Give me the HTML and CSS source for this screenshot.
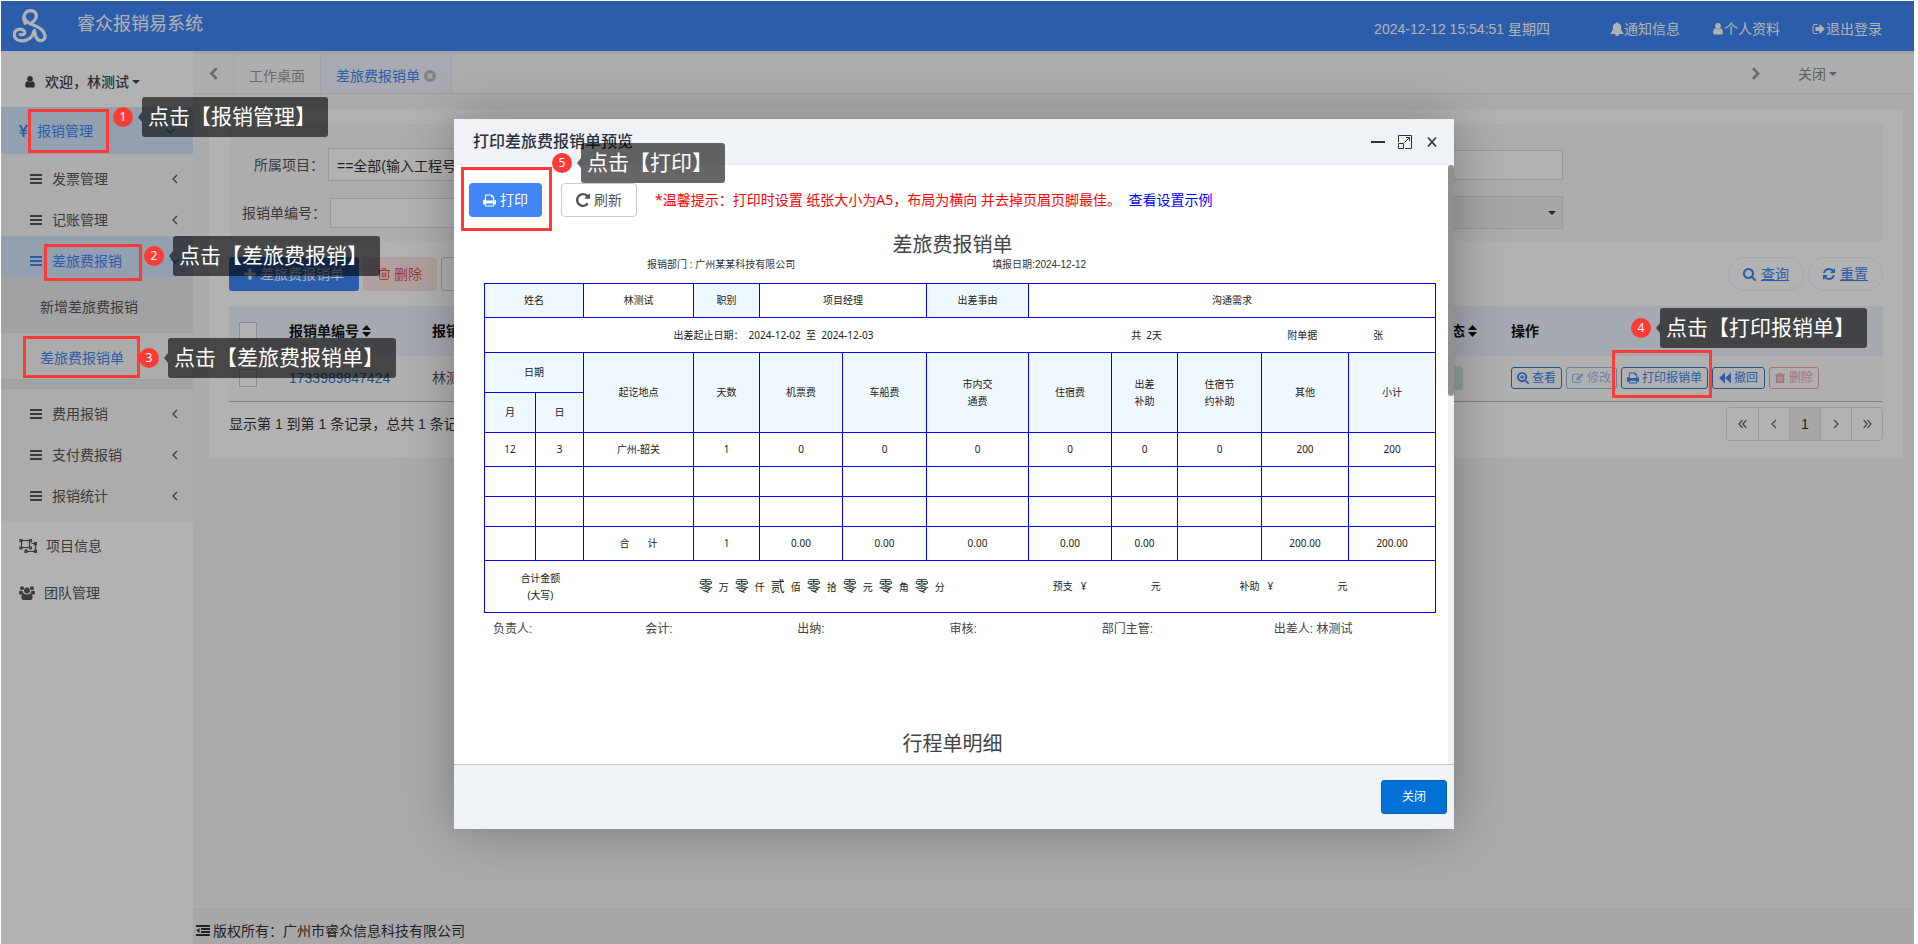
FILE: index.html
```html
<!DOCTYPE html>
<html lang="zh-CN">
<head>
<meta charset="utf-8">
<title>睿众报销易系统</title>
<link rel="stylesheet" href="styles.css">
</head>
<body>
<svg class="sprite" aria-hidden="true">
  <symbol id="user" viewBox="192 128 1408 1600"><path d="M1536 1399q0 109-62.5 187t-150.5 78h-854q-88 0-150.5-78t-62.5-187q0-85 8.5-160.5t31.5-152 58.5-131 94-89 134.5-34.5q131 128 313 128t313-128q76 0 134.5 34.5t94 89 58.5 131 31.5 152 8.5 160.5zm-256-887q0 159-112.5 271.5t-271.5 112.5-271.5-112.5-112.5-271.5 112.5-271.5 271.5-112.5 271.5 112.5 112.5 271.5z"/></symbol>
  <symbol id="bell" viewBox="0 0 1792 1792"><path d="M912 1696q0-16-16-16-59 0-101.5-42.5t-42.5-101.5q0-16-16-16t-16 16q0 73 51.5 124.5t124.5 51.5q16 0 16-16zm816-288q0 52-38 90t-90 38h-448q0 106-75 181t-181 75-181-75-75-181h-448q-52 0-90-38t-38-90q50-42 91-88t85-119.5 74.5-158.5 50-206 19.5-260q0-152 117-282.5t307-158.5q-8-19-8-39 0-40 28-68t68-28 68 28 28 68q0 20-8 39 190 28 307 158.5t117 282.5q0 139 19.5 260t50 206 74.5 158.5 85 119.5 91 88z"/></symbol>
  <symbol id="signout" viewBox="0 0 1792 1792"><path d="M704 1440q0 4 1 20t.5 26.5-3 23.5-10 19.5-20.5 6.5h-320q-119 0-203.5-84.5t-84.5-203.5v-704q0-119 84.5-203.5t203.5-84.5h320q13 0 22.5 9.5t9.5 22.5q0 4 1 20t.5 26.5-3 23.5-10 19.5-20.5 6.5h-320q-66 0-113 47t-47 113v704q0 66 47 113t113 47h312l11.5 1 11.5 3 8 5.5 7 9 2 13.5zm928-544q0 26-19 45l-544 544q-19 19-45 19t-45-19-19-45v-288h-448q-26 0-45-19t-19-45v-384q0-26 19-45t45-19h448v-288q0-26 19-45t45-19 45 19l544 544q19 19 19 45z"/></symbol>
  <symbol id="bars" viewBox="0 0 12 11"><path d="M0 0h12v2H0zM0 4h12v2H0zM0 8h12v2H0z"/></symbol>
  <symbol id="chevleft" viewBox="320 0 1200 1664"><path d="M1427 301l-531 531 531 531q19 19 19 45t-19 45l-166 166q-19 19-45 19t-45-19l-742-742q-19-19-19-45t19-45l742-742q19-19 45-19t45 19l166 166q19 19 19 45t-19 45z"/></symbol>
  <symbol id="chevright" viewBox="320 0 1200 1664"><path d="M1363 877l-742 742q-19 19-45 19t-45-19l-166-166q-19-19-19-45t19-45l531-531-531-531q-19-19-19-45t19-45l166-166q19-19 45-19t45 19l742 742q19 19 19 45t-19 45z"/></symbol>
  <symbol id="timescircle" viewBox="128 128 1536 1536"><path d="M1277 1122q0-26-19-45l-181-181 181-181q19-19 19-45 0-27-19-46l-90-90q-19-19-46-19-26 0-45 19l-181 181-181-181q-19-19-45-19-27 0-46 19l-90 90q-19 19-19 46 0 26 19 45l181 181-181 181q-19 19-19 45 0 27 19 46l90 90q19 19 46 19 26 0 45-19l181-181 181 181q19 19 45 19 27 0 46-19l90-90q19-19 19-46zm387-226q0 209-103 385.5t-279.5 279.5-385.5 103-385.5-103-279.5-279.5-103-385.5 103-385.5 279.5-279.5 385.5-103 385.5 103 279.5 279.5 103 385.5z"/></symbol>
  <symbol id="search" viewBox="64 128 1664 1664"><path d="M1216 832q0-185-131.5-316.5t-316.5-131.5-316.5 131.5-131.5 316.5 131.5 316.5 316.5 131.5 316.5-131.5 131.5-316.5zm512 832q0 52-38 90t-90 38q-54 0-90-38l-343-342q-179 124-399 124-143 0-273.5-55.5t-225-150-150-225-55.5-273.5 55.5-273.5 150-225 225-150 273.5-55.5 273.5 55.5 225 150 150 225 55.5 273.5q0 220-124 399l343 343q37 37 37 90z"/></symbol>
  <symbol id="zoomin" viewBox="64 128 1664 1664"><path d="M1216 832q0-185-131.5-316.5t-316.5-131.5-316.5 131.5-131.5 316.5 131.5 316.5 316.5 131.5 316.5-131.5 131.5-316.5zm512 832q0 52-38 90t-90 38q-54 0-90-38l-343-342q-179 124-399 124-143 0-273.5-55.5t-225-150-150-225-55.5-273.5 55.5-273.5 150-225 225-150 273.5-55.5 273.5 55.5 225 150 150 225 55.5 273.5q0 220-124 399l343 343q37 37 37 90zM690 530h156v224h224v156H846v224H690V910H466V754h224z"/></symbol>
  <symbol id="refresh" viewBox="128 128 1536 1536"><path d="M1639 1056q0 5-1 7-64 268-268 434.5t-478 166.5q-146 0-282.5-55t-243.5-157l-129 129q-19 19-45 19t-45-19-19-45v-448q0-26 19-45t45-19h448q26 0 45 19t19 45-19 45l-137 137q71 66 161 102t187 36q134 0 250-65t186-179q11-17 53-117 8-23 30-23h192q13 0 22.5 9.5t9.5 22.5zm25-800v448q0 26-19 45t-45 19h-448q-26 0-45-19t-19-45 19-45l138-138q-148-137-349-137-134 0-250 65t-186 179q-11 17-53 117-8 23-30 23h-199q-13 0-22.5-9.5t-9.5-22.5v-7q65-268 270-434.5t480-166.5q146 0 284 55.5t245 156.5l130-129q19-19 45-19t45 19 19 45z"/></symbol>
  <symbol id="repeat" viewBox="128 128 1536 1536"><path d="M1664 256v448q0 26-19 45t-45 19h-448q-42 0-59-40-17-39 14-69l138-138q-148-137-349-137-104 0-198.500 40.500t-163.500 109.500-109.500 163.500-40.500 198.500 40.500 198.500 109.500 163.500 163.500 109.500 198.500 40.500q119 0 225-52t179-147q7-10 23-12 15 0 25 9l137 138q9 8 9.500 20.500t-7.500 22.500q-109 132-264 204.500t-327 72.500q-156 0-298-61t-245-164-164-245-61-298 61-298 164-245 245-164 298-61q147 0 284.500 55.500t244.500 156.500l130-129q29-31 70-14 39 17 39 59z"/></symbol>
  <symbol id="print" viewBox="64 128 1664 1536"><path d="M448 1536h896v-256h-896v256zm0-640h896v-384h-160q-40 0-68-28t-28-68v-160h-640v640zm1152 64q0-26-19-45t-45-19-45 19-19 45 19 45 45 19 45-19 19-45zm128 0v416q0 13-9.500 22.500t-22.500 9.500h-224v160q0 40-28 68t-68 28h-960q-40 0-68-28t-28-68v-160h-224q-13 0-22.500-9.500t-9.500-22.500v-416q0-79 56.500-135.500t135.500-56.500h64v-544q0-40 28-68t68-28h672q40 0 88 20t76 48l152 152q28 28 48 76t20 88v256h64q79 0 135.500 56.500t56.500 135.500z"/></symbol>
  <symbol id="plus" viewBox="0 0 12 12"><path d="M4.500 0.500h3v4h4v3h-4v4h-3v-4h-4v-3h4z"/></symbol>
  <symbol id="trash" viewBox="0 0 12 12"><path fill-rule="evenodd" d="M4 0h4l1 1.500h3v1.300h-1V11q0 1-1 1H2q-1 0-1-1V2.800H0V1.500h3zM3.300 4.200v6h1v-6zM5.500 4.200v6h1v-6zM7.700 4.200v6h1v-6zM4.600 1l-.3.600h3.400L7.400 1z"/></symbol>
  <symbol id="trasho" viewBox="0 0 12 12"><path fill="none" stroke="currentColor" d="M0 2.500h12M3.500 2.500l.7-1.800h3.600l.7 1.800M1.500 2.500v8q0 1 1 1h7q1 0 1-1v-8M4.200 4.500v5M6 4.500v5M7.800 4.500v5"/></symbol>
  <symbol id="edit" viewBox="0 0 14 12"><path fill="none" stroke="currentColor" stroke-width="1.300" d="M8.500 1.600H2.600q-1.900 0-1.900 1.900v5.800q0 1.900 1.900 1.900h5.800q1.900 0 1.900-1.900V7.800"/><path d="M11.200.3l2.300 2.300-6 6H5.200V6.300z"/></symbol>
  <symbol id="backward" viewBox="0 0 12 11"><path d="M6 0v11L.2 5.500zM12 0v11L6.200 5.500z"/></symbol>
  <symbol id="outdent" viewBox="0 0 14 11"><path d="M0 0h14v2H0zM5 3h9v2H5zM5 6h9v2H5zM0 9h14v2H0zM3.500 3v5L.3 5.500z"/></symbol>
  <symbol id="yen" viewBox="0 0 9 12"><path d="M0 0h2.200l2.300 4.300L6.800 0H9L6.300 5h1.900v1.300H5.500v1.100h2.700v1.300H5.500V12h-2V8.700H.8V7.400h2.700V6.300H.8V5h1.900z"/></symbol>
  <symbol id="group" viewBox="0 0 18 14"><path fill="none" stroke="currentColor" stroke-width="1.200" d="M2.500 1.500h8v7h-8zM12.500 4.500h4v8h-9v-2.500M1 .6h2v2H1zM10.500.6h2v2h-2zM1 8h2v2H1zM10.500 8h2v2h-2zM15.400 3.600h2v2h-2zM15.400 11.400h2v2h-2zM6 11.400h2v2H6z"/></symbol>
  <symbol id="users" viewBox="0 0 16 14"><circle cx="3" cy="2.300" r="2"/><circle cx="13" cy="2.300" r="2"/><circle cx="8" cy="4.500" r="2.900"/><path d="M1.300 4.500q1 .7 2.500.5-.2 1.600.9 2.700-1 .1-1.700.8H1.200Q0 8.500 0 7.200q0-2.500 1.300-2.700zM14.700 4.500q-1 .7-2.500.5.2 1.600-.9 2.700 1 .1 1.700.8h1.800q1.200 0 1.200-1.300 0-2.500-1.300-2.700zM4.800 7.500q1.300 1 3.200 1t3.200-1q2.400 0 2.400 4.300 0 2.200-2 2.200H4.400q-2 0-2-2.200 0-4.300 2.400-4.300z"/></symbol>
  <symbol id="angleleft" viewBox="0 0 6 10"><path fill="none" stroke="currentColor" stroke-width="1.300" d="M5 1L1 5l4 4"/></symbol>
  <symbol id="angleright" viewBox="0 0 6 10"><path fill="none" stroke="currentColor" stroke-width="1.300" d="M1 1l4 4-4 4"/></symbol>
  <symbol id="angledown" viewBox="0 0 10 6"><path fill="none" stroke="currentColor" stroke-width="1.300" d="M1 1l4 4 4-4"/></symbol>
  <symbol id="dblleft" viewBox="0 0 9 10"><path fill="none" stroke="currentColor" stroke-width="1.200" d="M4.500 1l-3.500 4 3.500 4M8.300 1L4.800 5l3.500 4"/></symbol>
  <symbol id="dblright" viewBox="0 0 9 10"><path fill="none" stroke="currentColor" stroke-width="1.200" d="M.7 1l3.500 4L.7 9M4.500 1L8 5 4.500 9"/></symbol>
  <symbol id="caret" viewBox="0 0 8 4"><path d="M0 0h8L4 4z"/></symbol>
  <symbol id="sort" viewBox="0 0 9 12"><path d="M0 5l4.500-5L9 5zM0 7h9l-4.500 5z"/></symbol>
</svg>

<div class="app">
  <header class="topbar">
    <svg class="logo" viewBox="0 0 32 32" aria-label="logo"><path d="M11.500 13.500C8.500 8 11 1.600 16.500 1.600c6 0 7 6.400 3.200 9.600l-3 2.600M11 8.500c.3 4.500 7 5.500 12.500 8.500 8 4.500 8.500 12 3 12.700-6 .6-5.500-7-6.300-9.500M19.500 21c-.5 5.500-6 9.500-12 9C1 29.400-.5 23 3 20.300c4-3 10 .2 7.500 3.200-1.200 1.300-3 .8-3.600.6"/></svg>
    <h1 class="brand">睿众报销易系统</h1>
    <nav class="toplinks">
      <time class="clock">2024-12-12 15:54:51 星期四</time>
      <a href="#"><svg class="i14"><use href="#bell"/></svg>通知信息</a>
      <a href="#"><svg class="i12"><use href="#user"/></svg>个人资料</a>
      <a href="#"><svg class="i14"><use href="#signout"/></svg>退出登录</a>
    </nav>
  </header>
  <div class="frame">
    <aside class="sidebar">
      <button class="welcome"><svg class="i12"><use href="#user"/></svg><span>欢迎，林测试</span><svg class="caret"><use href="#caret"/></svg></button>
      <a class="menu active" href="#"><svg class="yen"><use href="#yen"/></svg><span>报销管理</span><svg class="down"><use href="#angledown"/></svg></a>
      <div class="submenu">
        <a class="sub" href="#"><svg class="bars"><use href="#bars"/></svg><span>发票管理</span><svg class="arrow"><use href="#angleleft"/></svg></a>
        <a class="sub" href="#"><svg class="bars"><use href="#bars"/></svg><span>记账管理</span><svg class="arrow"><use href="#angleleft"/></svg></a>
        <a class="sub active" href="#"><svg class="bars"><use href="#bars"/></svg><span>差旅费报销</span><svg class="down"><use href="#angledown"/></svg></a>
        <div class="leafs">
          <a class="leaf" href="#">新增差旅费报销</a>
          <a class="leaf current" href="#">差旅费报销单</a>
        </div>
        <a class="sub" href="#"><svg class="bars"><use href="#bars"/></svg><span>费用报销</span><svg class="arrow"><use href="#angleleft"/></svg></a>
        <a class="sub" href="#"><svg class="bars"><use href="#bars"/></svg><span>支付费报销</span><svg class="arrow"><use href="#angleleft"/></svg></a>
        <a class="sub" href="#"><svg class="bars"><use href="#bars"/></svg><span>报销统计</span><svg class="arrow"><use href="#angleleft"/></svg></a>
      </div>
      <a class="menu" href="#"><svg class="group"><use href="#group"/></svg><span>项目信息</span></a>
      <a class="menu" href="#"><svg class="users"><use href="#users"/></svg><span>团队管理</span></a>
    </aside>
    <div class="main">
      <div class="tabs">
        <button class="tabnav" aria-label="向左"><svg class="chev"><use href="#chevleft"/></svg></button>
        <a class="tab" href="#">工作桌面</a>
        <a class="tab active" href="#">差旅费报销单<svg class="i12"><use href="#timescircle"/></svg></a>
        <button class="tabnav next" aria-label="向右"><svg class="chev"><use href="#chevright"/></svg></button>
        <button class="tabclose">关闭<svg class="caret"><use href="#caret"/></svg></button>
      </div>
      <main class="content">
        <section class="card">
          <form class="filters">
            <div class="frow">
              <label for="project">所属项目：</label>
              <input id="project" class="tall" value="==全部(输入工程号">
              <input class="right" aria-label="姓名">
            </div>
            <div class="frow wide">
              <label for="code">报销单编号：</label>
              <input id="code">
              <span class="right selectbox"><select aria-label="状态"><option></option></select><svg class="caret"><use href="#caret"/></svg></span>
            </div>
          </form>
          <div class="toolbar">
            <button class="btn primary"><svg class="i12"><use href="#plus"/></svg>差旅费报销单</button>
            <button class="btn danger"><svg class="i12"><use href="#trasho"/></svg>删除</button>
            <button class="btn plain" aria-label="导出"><i class="dot"></i></button>
            <div class="queries">
              <a class="pill" href="#"><svg class="i13"><use href="#search"/></svg><u>查询</u></a>
              <a class="pill" href="#"><svg class="i12"><use href="#refresh"/></svg><u>重置</u></a>
            </div>
          </div>
          <table class="list">
            <colgroup><col class="c-check"><col class="c-code"><col><col class="c-state"><col class="c-ops"></colgroup>
            <thead><tr>
              <th><input type="checkbox" aria-label="全选"></th>
              <th>报销单编号<svg class="sort"><use href="#sort"/></svg></th>
              <th>报销</th>
              <th>状态<svg class="sort"><use href="#sort"/></svg></th>
              <th>操作</th>
            </tr></thead>
            <tbody><tr>
              <td><input type="checkbox" aria-label="选择"></td>
              <td><a href="#">1733989847424</a></td>
              <td>林测试</td>
              <td><span class="badge"></span></td>
              <td><div class="ops">
                <button><svg class="i12"><use href="#zoomin"/></svg>查看</button>
                <button disabled><svg class="i12"><use href="#edit"/></svg>修改</button>
                <button><svg class="i12"><use href="#print"/></svg>打印报销单</button>
                <button class="tight"><svg class="i12"><use href="#backward"/></svg>撤回</button>
                <button class="del" disabled><svg class="i10"><use href="#trash"/></svg>删除</button>
              </div></td>
            </tr></tbody>
          </table>
          <div class="pager">
            <p>显示第 1 到第 1 条记录，总共 1 条记录</p>
            <nav class="pages">
              <a href="#" aria-label="首页"><svg class="dbl"><use href="#dblleft"/></svg></a>
              <a href="#" aria-label="上一页"><svg class="arrow"><use href="#angleleft"/></svg></a>
              <a class="on" href="#">1</a>
              <a href="#" aria-label="下一页"><svg class="arrow"><use href="#angleright"/></svg></a>
              <a href="#" aria-label="末页"><svg class="dbl"><use href="#dblright"/></svg></a>
            </nav>
          </div>
        </section>
      </main>
      <footer class="foot"><svg class="outdent"><use href="#outdent"/></svg>版权所有：广州市睿众信息科技有限公司</footer>
    </div>
  </div>
  <div class="mask"></div>
</div>

<div class="modal" role="dialog" aria-labelledby="dlg">
  <header class="mhead">
    <h2 id="dlg">打印差旅费报销单预览</h2>
    <button aria-label="最小化"><svg viewBox="0 0 14 14"><path d="M0 7h14" stroke-width="2"/></svg></button>
    <button aria-label="最大化"><svg viewBox="0 0 14 14"><path d="M.5 7V.5h13v13H7M.5 8.500h5v5h-5zM6.500 7.500l5-5M8 2.500h3.500V6"/></svg></button>
    <button aria-label="关闭窗口"><svg viewBox="0 0 14 14"><path d="M3 2.500l8 9M11 2.500l-8 9" stroke-width="1.600"/></svg></button>
  </header>
  <div class="mbody">
    <div class="sheet">
      <div class="mtools">
        <button class="btn primary"><svg class="i13"><use href="#print"/></svg>打印</button>
        <button class="btn plain"><svg class="i14"><use href="#repeat"/></svg>刷新</button>
        <p class="hint">*温馨提示：打印时设置 纸张大小为A5，布局为横向 并去掉页眉页脚最佳。 <a href="#">查看设置示例</a></p>
      </div>
      <h3 class="ptitle">差旅费报销单</h3>
      <div class="pmeta"><span>报销部门 : 广州某某科技有限公司</span><span>填报日期:2024-12-12</span></div>
      <table class="form">
        <colgroup><col class="w51"><col class="w48"><col class="w110"><col class="w66"><col class="w83"><col class="w84"><col class="w102"><col class="w83"><col class="w66"><col class="w84"><col class="w87"><col class="w87"></colgroup>
        <tr class="h34"><th colspan="2">姓名</th><td>林测试</td><th>职别</th><td colspan="2">项目经理</td><th>出差事由</th><td colspan="5">沟通需求</td></tr>
        <tr class="h35"><td colspan="12"><div class="trip"><span>出差起止日期：&nbsp; 2024-12-02 &nbsp;至&nbsp; 2024-12-03</span><span>共&nbsp; 2天</span><span>附单据</span><span>张</span></div></td></tr>
        <tr class="h40"><th colspan="2">日期</th><th rowspan="2">起讫地点</th><th rowspan="2">天数</th><th rowspan="2">机票费</th><th rowspan="2">车船费</th><th rowspan="2">市内交<br>通费</th><th rowspan="2">住宿费</th><th rowspan="2">出差<br>补助</th><th rowspan="2">住宿节<br>约补助</th><th rowspan="2">其他</th><th rowspan="2">小计</th></tr>
        <tr class="h40"><th>月</th><th>日</th></tr>
        <tr class="h34"><td>12</td><td>3</td><td>广州-韶关</td><td>1</td><td>0</td><td>0</td><td>0</td><td>0</td><td>0</td><td>0</td><td>200</td><td>200</td></tr>
        <tr class="h30"><td></td><td></td><td></td><td></td><td></td><td></td><td></td><td></td><td></td><td></td><td></td><td></td></tr>
        <tr class="h30"><td></td><td></td><td></td><td></td><td></td><td></td><td></td><td></td><td></td><td></td><td></td><td></td></tr>
        <tr class="h34"><td></td><td></td><td><span class="sum"><span>合</span><span>计</span></span></td><td>1</td><td>0.00</td><td>0.00</td><td>0.00</td><td>0.00</td><td>0.00</td><td></td><td>200.00</td><td>200.00</td></tr>
        <tr class="h52"><td colspan="12"><div class="total">
          <span>合计金额<br>(大写)</span>
          <span class="caps"><b>零</b><i>万</i><b>零</b><i>仟</i><b>贰</b><i>佰</i><b>零</b><i>拾</i><b>零</b><i>元</i><b>零</b><i>角</i><b>零</b><i>分</i></span>
          <span class="amt"><span>预支</span><span>¥</span><span>元</span></span>
          <span class="amt"><span>补助</span><span>¥</span><span>元</span></span>
        </div></td></tr>
      </table>
      <div class="signs"><span>负责人:</span><span>会计:</span><span>出纳:</span><span>审核:</span><span>部门主管:</span><span>出差人: 林测试</span></div>
      <h3 class="ptitle second">行程单明细</h3>
    </div>
    <div class="scroll"><div class="thumb"></div></div>
  </div>
  <footer class="mfoot"><button>关闭</button></footer>
</div>

<div class="mark m1"></div><div class="mark m2"></div><div class="mark m3"></div><div class="mark m4"></div><div class="mark m5"></div>
<div class="step s1"><span class="num">1</span><span class="tip">点击【报销管理】</span></div>
<div class="step s2"><span class="num">2</span><span class="tip">点击【差旅费报销】</span></div>
<div class="step s3"><span class="num">3</span><span class="tip">点击【差旅费报销单】</span></div>
<div class="step s4"><span class="num">4</span><span class="tip">点击【打印报销单】</span></div>
<div class="step s5"><span class="num">5</span><span class="tip">点击【打印】</span></div>
</body>
</html>
```
FILE: styles.css
```css
* { box-sizing: border-box; }
body { margin: 0; position: relative; background: #fff; color: #333; font: 14px/20px "Liberation Sans", "Noto Sans CJK SC", sans-serif; overflow: hidden; }
a { color: inherit; text-decoration: none; }
button, input, select { font: inherit; color: inherit; }
button { border: 0; background: none; padding: 0; cursor: pointer; }
svg { display: block; flex: none; fill: currentColor; }
h1, h2, h3, p { margin: 0; font-weight: 400; }
.sprite { position: absolute; width: 0; height: 0; }
.i10 { width: 10px; height: 10px; }
.i12 { width: 12px; height: 12px; }
.i13 { width: 13px; height: 13px; }
.i14 { width: 14px; height: 14px; }
.caret { width: 8px; height: 4px; }
.arrow { width: 6px; height: 10px; }
.down { width: 10px; height: 6px; }

.app { position: relative; display: flex; flex-direction: column; min-height: calc(100vh - 1px); margin: 1px 4px 0 1px; }
.mask { position: absolute; inset: 0; background: rgba(0, 0, 0, .3); }
.topbar { display: flex; align-items: center; height: 50px; padding: 0 32px 0 12px; background: #4086f4; color: #fff; }
.logo { width: 34px; height: 34px; fill: none; stroke: #fff; stroke-width: 3; stroke-linecap: round; }
.brand { margin: 0 auto 4px 30px; font-size: 18px; line-height: 24px; }
.toplinks { display: flex; align-items: center; gap: 32px; padding-top: 6px; }
.toplinks a { display: flex; align-items: center; }
.clock { margin-right: 28px; }

.frame { flex: 1; display: flex; }
.sidebar { flex: none; width: 192px; background: #fff; color: #555; }
.sidebar a, .welcome { display: flex; align-items: center; }
.welcome { width: 100%; height: 56px; padding: 6px 24px 0 23px; color: #444; font-weight: 500; }
.welcome span { margin: 0 3px 0 9px; }
.menu { height: 47px; padding: 1px 18px 0; gap: 9px; }
.menu .down, .sub .down { margin-left: auto; }
.active { background: #d2e6fb; color: #4086f4; }
.yen { width: 9px; height: 12px; }
.group { width: 18px; height: 14px; }
.users { width: 16px; height: 14px; }
.submenu { padding-bottom: 10px; background: #f6f6f6; }
.sub { height: 41px; padding: 9px 15px 0 29px; gap: 10px; }
.bars { width: 12px; height: 11px; }
.sub .arrow { margin-left: auto; }
.sub .down { margin-right: -2px; }
.leafs { display: flex; flex-direction: column; gap: 5px; padding: 5px 0 10px; background: #e7e8ea; }
.leaf { height: 46px; padding: 4px 0 0 39px; }
.leaf.current { background: #f6f6f6; color: #4086f4; }

.main { flex: 1; min-width: 0; display: flex; flex-direction: column; background: #f3f5f7; }
.tabs { display: flex; height: 43px; border-top: 3px solid #eee; border-bottom: 1px solid #e6e6e6; background: #fafafa; color: #999; }
.tabnav { width: 40px; display: flex; align-items: center; justify-content: center; }
.chev { width: 9px; height: 13px; }
.tab { display: flex; align-items: center; gap: 4px; padding: 4px 15px 0; border-left: 1px solid #eaeaea; }
.tab.active { background: #eff4fd; border-right: 1px solid #eaeaea; color: #4086f4; }
.tab svg { color: #bbb; }
.tabnav.next { margin-left: auto; }
.tabclose { display: flex; align-items: center; gap: 3px; padding: 0 77px 0 22px; color: #888; }
.content { flex: 1; padding: 15px 11px 15px 16px; }
.card { padding: 15px 20px 17px; background: #fff; }
.filters { padding: 24px 0 12px; background: #f8f8f8; display: grid; gap: 15px; }
.frow { display: flex; align-items: center; height: 33px; padding-left: 25px; }
.frow.wide { padding-left: 13px; }
.frow label { width: 74px; color: #555; }
.frow.wide label { width: 88px; }
.filters input { width: 240px; height: 30px; padding: 0 8px; border: 1px solid #ddd; background: #fff; }
.filters input.tall { height: 33px; }
.filters .right { width: 240px; margin: 0 320px 0 auto; }
.selectbox { display: flex; align-items: center; justify-content: flex-end; height: 33px; padding-right: 6px; border: 1px solid #ddd; background: #eee; }
.selectbox select { flex: 1; border: 0; background: none; appearance: none; }
.toolbar { display: flex; gap: 4px; padding: 16px 0 15px; }
.btn { display: flex; align-items: center; justify-content: center; gap: 4px; height: 34px; padding: 0 15px; border-radius: 3px; }
.primary { background: #4086f4; color: #fff; }
.danger { background: #fde5e5; color: #e05555; }
.plain { border: 1px solid #ccc; background: #fff; color: #555; }
.dot { width: 8px; height: 8px; border-radius: 4px; background: #f0ad4e; }
.queries { display: flex; gap: 4px; margin-left: auto; }
.pill { display: flex; align-items: center; gap: 5px; height: 34px; padding: 0 14px; border: 1px solid #eaf2fb; border-radius: 17px; color: #4086f4; }
.list { width: 100%; table-layout: fixed; border-collapse: collapse; }
.list th, .list td { padding: 0 10px; text-align: left; white-space: nowrap; }
.list th { height: 50px; background: #edf3fd; color: #111; font-weight: 700; }
.list td { height: 45px; border-bottom: 1px solid #bbb; background: #fcfcfc; color: #555; }
.list td a { color: #337ab7; }
.list input { display: block; width: 18px; height: 18px; margin: 0; appearance: none; border: 1px solid #ccc; background: #fff; }
.c-check { width: 50px; }
.c-code { width: 143px; }
.c-state { width: 74px; }
.c-ops { width: 382px; }
.sort { display: inline-block; width: 9px; height: 12px; margin-left: 3px; vertical-align: -1px; }
.badge { display: block; width: 26px; height: 24px; border-radius: 3px; background: #cdebdc; }
.ops { display: flex; gap: 4px; font-size: 12px; }
.ops button { display: flex; align-items: center; gap: 3px; height: 22px; padding: 0 5px; border: 1px solid #337ab7; border-radius: 3px; color: #4086f4; }
.ops button:disabled { opacity: .5; }
.ops .tight { padding: 0 6px; }
.ops .del { border-color: #e05555; color: #e05555; gap: 4px; }
.pager { display: flex; justify-content: space-between; padding-top: 5px; }
.pager p { padding-top: 7px; }
.pages { display: flex; border: 1px solid #ddd; border-radius: 4px; color: #666; }
.pages a { display: flex; align-items: center; justify-content: center; width: 31px; height: 32px; border-left: 1px solid #ddd; }
.pages a:first-child { border-left: 0; }
.pages .on { background: #eee; color: #333; }
.dbl { width: 9px; height: 10px; }
.foot { display: flex; align-items: center; gap: 3px; height: 35px; padding: 7px 3px 0; border-top: 1px solid #e7eaec; background: #efefef; color: #333; }
.outdent { width: 14px; height: 11px; }

.modal { position: absolute; left: 454px; top: 119px; width: 1000px; background: #fff; box-shadow: 1px 1px 50px rgba(0, 0, 0, .3); }
.mhead { display: flex; align-items: center; gap: 13px; height: 46px; padding: 0 15px 0 19px; border-bottom: 1px solid #eee; background: #eff3f7; color: #2a3040; }
.mhead h2 { margin-right: auto; font-size: 16px; line-height: 22px; font-weight: 500; }
.mhead svg { width: 14px; height: 14px; fill: none; stroke: currentColor; }
.mbody { position: relative; height: 599px; overflow: hidden; }
.sheet { padding: 18px 18px 0 15px; }
.mtools { display: flex; align-items: center; height: 34px; }
.mtools .btn { padding: 0 14px; border-radius: 4px; }
.mtools .plain { margin-left: 19px; }
.hint { margin-left: 18px; color: #f00; font-family: "Noto Sans", "Noto Sans CJK SC", sans-serif; }
.hint a { margin-left: 4px; color: #00f; }
.ptitle { margin-top: 16px; text-align: center; font-size: 20px; line-height: 24px; color: #444; }
.ptitle.second { margin-top: 94px; }
.pmeta { display: grid; grid-template-columns: 423fr 544fr; padding: 0 0 0 178px; font-size: 10px; line-height: 16px; margin-bottom: 10px; }
.form { width: 952px; margin-left: 15px; table-layout: fixed; border-collapse: collapse; font: 10px/17px "Noto Sans", "Noto Sans CJK SC", sans-serif; color: #222; }
.form th, .form td { padding: 0; border: 1px solid #00f; text-align: center; font-weight: 400; }
.form th { background: #eff7ff; }
.w48 { width: 48px; } .w51 { width: 51px; } .w66 { width: 66px; } .w83 { width: 83px; } .w84 { width: 84px; } .w87 { width: 87px; } .w102 { width: 102px; } .w110 { width: 110px; }
.h30 { height: 30px; } .h34 { height: 34px; } .h35 { height: 35px; } .h40 { height: 40px; } .h52 { height: 52px; }
.trip { display: grid; grid-template-columns: 578fr 170fr 142fr 62fr; }
.trip span:last-child { text-align: left; }
.sum { display: flex; justify-content: center; gap: 18px; }
.total { display: grid; grid-template-columns: 111fr 458fr 187fr 196fr; align-items: center; }
.caps { display: flex; align-items: baseline; justify-content: flex-end; gap: 6px; padding-right: 108px; }
.caps b { font-size: 14px; font-weight: 400; }
.caps i { font-style: normal; }
.amt { display: grid; grid-template-columns: 28px 70px 10px; text-align: left; }
.signs { display: grid; grid-template-columns: 152fr 152fr 152fr 152fr 172fr 162fr; padding: 7px 0 0 24px; font-size: 12px; line-height: 18px; color: #444; }
.scroll { position: absolute; top: 0; right: 0; bottom: 0; width: 6px; background: #f1f1f1; }
.thumb { height: 231px; border-radius: 3px; background: #909090; }
.mfoot { display: flex; justify-content: flex-end; padding: 15px 7px; border-top: 1px solid #c4c4c4; background: #eff3f7; }
.mfoot button { width: 66px; height: 34px; border: 1px solid #0b62b5; border-radius: 3px; background: #0271d5; color: #fff; font-size: 12px; }

.mark { position: absolute; border: 3px solid #ff3b38; }
.m1 { left: 28px; top: 109px; width: 81px; height: 44px; }
.m2 { left: 44px; top: 244px; width: 98px; height: 37px; }
.m3 { left: 23px; top: 336px; width: 117px; height: 42px; }
.m4 { left: 1612px; top: 350px; width: 100px; height: 48px; }
.m5 { left: 461px; top: 167px; width: 91px; height: 64px; }
.step { position: absolute; display: flex; align-items: center; gap: 9px; color: #fff; }
.s1 { left: 113px; top: 97px; }
.s2 { left: 144px; top: 236px; }
.s3 { left: 139px; top: 338px; }
.s4 { left: 1631px; top: 308px; }
.s5 { left: 552px; top: 143px; }
.num { width: 20px; border-radius: 10px; background: #ff3b38; text-align: center; font: 12px/20px "Noto Sans", sans-serif; }
.tip { position: relative; padding: 0 12px 0 6px; border-radius: 3px; background: rgba(0, 0, 0, .6); font-size: 21px; line-height: 40px; white-space: nowrap; }
.tip::before { content: ""; position: absolute; left: -4px; top: 15px; border: 5px solid transparent; border-width: 5px 4px 5px 0; border-right-color: rgba(0, 0, 0, .6); }
```
